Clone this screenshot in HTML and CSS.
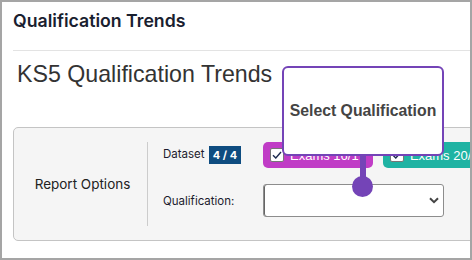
FILE: index.html
```html
<!DOCTYPE html>
<html lang="en">
<head>
    <meta charset="UTF-8">
    <meta name="viewport" content="width=device-width, initial-scale=1.0">
    <title>Qualification Trends</title>
    <link rel="stylesheet" href="styles.css">
</head>
<body>
    <div class="frame">
        <div class="page-head">
            <h1>Qualification Trends</h1>
        </div>

        <div class="content">
            <h2 class="report-title">KS5 Qualification Trends</h2>

            <div class="options-panel">
                <div class="options-label">Report Options</div>
                <div class="options-body">
                    <div class="option-name">Dataset <span class="count-badge">4 / 4</span></div>
                    <div class="dataset-list">
                        <label class="dataset-pill pill-purple">
                            <span class="tick"><svg width="10" height="8" viewBox="0 0 10 8"><path d="M1 4.2 L3.8 7 L9 1" fill="none" stroke="#1d2b4f" stroke-width="1.4"/></svg></span>
                            Exams 16/17
                        </label>
                        <label class="dataset-pill pill-teal">
                            <span class="tick"><svg width="10" height="8" viewBox="0 0 10 8"><path d="M1 4.2 L3.8 7 L9 1" fill="none" stroke="#1d2b4f" stroke-width="1.4"/></svg></span>
                            Exams 20/21
                        </label>
                    </div>

                    <div class="option-name">Qualification:</div>
                    <div class="select-box">
                        <svg width="10" height="7" viewBox="0 0 10 7"><path d="M1 1.2 L5 5.2 L9 1.2" fill="none" stroke="#444" stroke-width="2"/></svg>
                    </div>
                </div>
            </div>
        </div>

        <!-- guide tooltip pointing at the qualification select -->
        <div class="tip">
            <p>Select Qualification</p>
            <span class="tip-stem"></span>
            <span class="tip-dot"></span>
        </div>
    </div>
</body>
</html>
```

FILE: styles.css
```css
body {
    margin: 0;
    font-family: Inter, "Liberation Sans", sans-serif;
    color: #222;
}

.frame {
    position: relative;
    width: 472px;
    height: 260px;
    box-sizing: border-box;
    border: 2px solid #a5a5a5;
    background-color: #fff;
    overflow: hidden;
}

.page-head {
    margin-left: 11px;
    height: 48px;
    border-bottom: 1px solid #e3e3e3;
}

.page-head h1 {
    margin: 0;
    padding-top: 8px;
    font-size: 17.7px;
    font-weight: 600;
    line-height: 22px;
    color: #19202f;
}

.content {
    padding-left: 11px;
}

.report-title {
    margin: 9px 0 39px 4px;
    font-family: "Liberation Sans", Arial, sans-serif;
    font-size: 23.2px;
    font-weight: 400;
    line-height: 28px;
    color: #333;
}

.options-panel {
    display: flex;
    width: 560px;
    padding: 14px 0;
    background-color: #f5f5f5;
    border: 1px solid #c4c4c4;
    border-radius: 5px;
}

.options-label {
    width: 129px;
    padding-left: 4px;
    display: flex;
    align-items: center;
    justify-content: center;
    font-size: 13.5px;
    color: #222;
}

.options-body {
    display: grid;
    grid-template-columns: 100px auto;
    grid-template-rows: 26px 33px;
    row-gap: 16px;
    align-content: start;
    height: 75px;
    padding: 0 0 9px 15px;
    border-left: 1px solid #ccc;
}

.option-name {
    align-self: center;
    font-size: 11.5px;
    color: #1c1c2e;
}

.count-badge {
    display: inline-block;
    margin-left: 1px;
    padding: 0 4px;
    height: 18px;
    line-height: 18px;
    background-color: #0e4c80;
    color: #fff;
    font-size: 11px;
    font-weight: 700;
    vertical-align: middle;
}

.dataset-list {
    display: flex;
    gap: 10px;
}

.dataset-pill {
    display: flex;
    align-items: center;
    gap: 6px;
    height: 26px;
    padding: 0 7px;
    border-radius: 5px;
    color: #fff;
    font-family: "Liberation Sans", Arial, sans-serif;
    font-size: 13px;
    white-space: nowrap;
}

.pill-purple {
    background-color: #c03cc6;
}

.pill-teal {
    background-color: #1fb3a3;
}

.tick {
    display: flex;
    align-items: center;
    justify-content: center;
    width: 14px;
    height: 14px;
    box-sizing: border-box;
    background-color: #fff;
    border: 1px solid #767676;
    border-radius: 2px;
}

.select-box {
    display: flex;
    align-items: center;
    justify-content: flex-end;
    width: 181px;
    height: 33px;
    box-sizing: border-box;
    padding-right: 4px;
    background-color: #fff;
    border: 1px solid #8d8d8d;
    border-radius: 3px;
    box-shadow: inset 1px 0 0 #666;
}

.tip {
    position: absolute;
    left: 280px;
    top: 64px;
    width: 162px;
    height: 90px;
    box-sizing: border-box;
    display: flex;
    align-items: center;
    justify-content: center;
    background-color: #fff;
    border: 2px solid #7444b7;
    border-radius: 6px;
}

.tip p {
    margin: 0;
    font-family: "Liberation Sans", Arial, sans-serif;
    font-size: 15.8px;
    font-weight: 700;
    color: #444;
}

.tip-stem {
    position: absolute;
    left: 76px;
    top: calc(100% + 2px);
    width: 6px;
    height: 22px;
    background-color: #7444b7;
}

.tip-dot {
    position: absolute;
    left: 68px;
    top: 108px;
    width: 21px;
    height: 21px;
    border-radius: 50%;
    background-color: #7444b7;
}
```
